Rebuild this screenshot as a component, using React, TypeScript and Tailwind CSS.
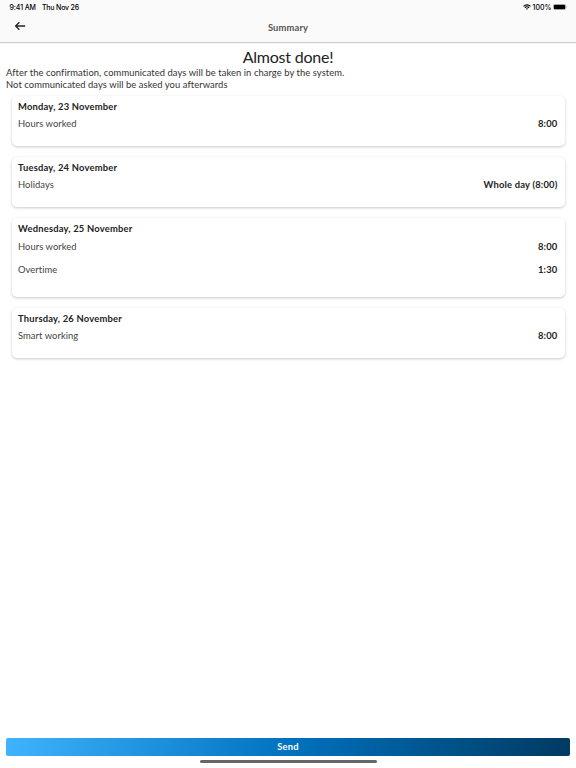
import React from 'react';
import clsx from 'clsx';

interface Entry {
  label: string;
  value: string;
}

interface Day {
  title: string;
  entries: Entry[];
}

const days: Day[] = [
  { title: 'Monday, 23 November', entries: [{ label: 'Hours worked', value: '8:00' }] },
  { title: 'Tuesday, 24 November', entries: [{ label: 'Holidays', value: 'Whole day (8:00)' }] },
  {
    title: 'Wednesday, 25 November',
    entries: [
      { label: 'Hours worked', value: '8:00' },
      { label: 'Overtime', value: '1:30' },
    ],
  },
  { title: 'Thursday, 26 November', entries: [{ label: 'Smart working', value: '8:00' }] },
];

const StatusBar: React.FC = () => (
  <div className="flex h-[14px] items-center justify-between pl-[9.5px] pr-[9px] font-['Inter',sans-serif] text-[7px] font-medium leading-none text-black">
    <div className="flex gap-[6px]">
      <span className="tracking-[-0.1px]">9:41 AM</span>
      <span className="tracking-[-0.18px]">Thu Nov 26</span>
    </div>
    <div className="flex items-center">
      <svg viewBox="0 0 16 12" className="mr-[2px] h-[6px] w-[8px]" fill="none" stroke="black" strokeWidth="2.2">
        <path d="M1 4.6a10 10 0 0 1 14 0" />
        <path d="M3.8 7.5a6 6 0 0 1 8.4 0" />
        <path d="M8 11.6 5.9 9.4a3 3 0 0 1 4.2 0Z" fill="black" stroke="none" />
      </svg>
      <span>100%</span>
      <svg viewBox="0 0 28 12" className="ml-[1.5px] h-[6px] w-[14px]">
        <rect x="0.5" y="0.5" width="25" height="11" rx="3" fill="none" stroke="#999" />
        <rect x="1.6" y="1.6" width="22.8" height="8.8" rx="2" fill="black" />
        <path d="M26.6 4v4c1-.4 1.4-1 1.4-2s-.4-1.6-1.4-2Z" fill="#999" />
      </svg>
    </div>
  </div>
);

const DayCard: React.FC<{ day: Day }> = ({ day }) => (
  <section
    className={clsx(
      'rounded-[5px] bg-white pl-[6.5px] pr-[7px] pt-[5px] shadow-[0_1px_3px_rgba(0,0,0,0.22)]',
      day.entries.length > 1 ? 'h-[78.5px]' : 'h-[50px]'
    )}
  >
    <h2 className="mb-[0.6px] h-[11px] text-[9.4px] font-bold leading-[11px] tracking-[0.2px] text-[#222]">{day.title}</h2>
    {day.entries.map((entry) => (
      <div key={entry.label} className="flex h-[23px] items-center justify-between text-[9.4px] leading-none">
        <span className="tracking-[0.06px] text-[#444]">{entry.label}</span>
        <span className="font-bold tracking-[0.2px] text-[#222]">{entry.value}</span>
      </div>
    ))}
  </section>
);

const App: React.FC = () => {
  return (
    <div className="flex h-screen flex-col bg-white font-['Lato',sans-serif] [font-variant-ligatures:none]">
      <header className="h-[42px] shrink-0 bg-[#fafafa] shadow-[0_1px_1px_rgba(0,0,0,0.2)]">
        <StatusBar />
        <div className="grid h-[28px] grid-cols-3 items-center px-[14px]">
          <button aria-label="Back" className="-mt-[4px] justify-self-start">
            <svg viewBox="0 0 12 10" className="h-[10px] w-[12px]" fill="none" stroke="#222" strokeWidth="1.3">
              <path d="M11.2 5H1.6M5.4 1.2 1.6 5l3.8 3.8" />
            </svg>
          </button>
          <h1 className="justify-self-center text-[9.4px] font-bold leading-none tracking-[0.14px] text-[#555]">
            Summary
          </h1>
        </div>
      </header>

      <main className="flex-1">
        <div className="px-[6px] pt-[5px]">
          <h2 className="text-center text-[16px] leading-[20px] tracking-[-0.22px] text-[#222]">Almost done!</h2>
          <p className="text-[9.4px] leading-[11.5px] tracking-[0.07px] text-[#333]">
            After the confirmation, communicated days will be taken in charge by the system.
            <br />
            Not communicated days will be asked you afterwards
          </p>
        </div>
        <div className="flex flex-col gap-[11.2px] px-[11.5px] pt-[5.8px]">
          {days.map((day) => (
            <DayCard key={day.title} day={day} />
          ))}
        </div>
      </main>

      <footer className="flex flex-col items-center px-[6px] pb-[5px]">
        <button className="h-[18px] w-full rounded-[2px] bg-[linear-gradient(100deg,#40b3ff_0%,#0072bf_50%,#003a61_100%)] text-[9.4px] font-bold leading-none tracking-[0.14px] text-white">
          Send
        </button>
        <div className="mt-[4px] h-[3px] w-[177px] rounded-full bg-[#666]" />
      </footer>
    </div>
  );
};

export default App;
